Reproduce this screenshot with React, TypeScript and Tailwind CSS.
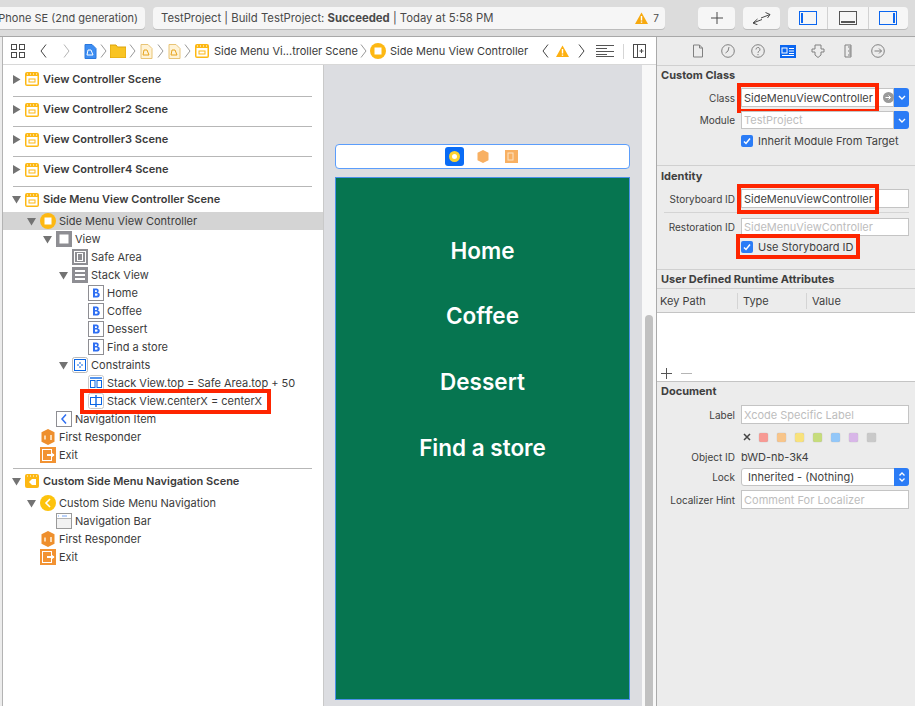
import React from 'react';

type Kind =
  | 'scene'
  | 'sceneNav'
  | 'vc'
  | 'view'
  | 'safe'
  | 'stack'
  | 'button'
  | 'constraints'
  | 'cTop'
  | 'cCenter'
  | 'navItem'
  | 'responder'
  | 'exit'
  | 'navVc'
  | 'navBar';

const Icon = ({ kind }: { kind: Kind }) => {
  const s = { width: 16, height: 16, viewBox: '0 0 16 16', className: 'shrink-0' };
  switch (kind) {
    case 'scene':
      return (
        <svg {...s}>
          <rect x="1" y="1" width="14" height="14" rx="2" fill="#fdb813" />
          <rect x="2.5" y="5" width="11" height="8.5" fill="#fff" />
          <rect x="5" y="8" width="6" height="3" fill="#fff" stroke="#fdb813" />
          <path d="M3 3h1M6 3h1M9 3h1M12 3h1" stroke="#fff" />
        </svg>
      );
    case 'sceneNav':
      return (
        <svg {...s}>
          <rect x="1" y="1" width="14" height="14" rx="2" fill="#fdb813" />
          <path d="M3 3h1M6 3h1M9 3h1M12 3h1" stroke="#fff" />
          <path d="M5 9l3-3h4v6H8z" fill="#fff" />
        </svg>
      );
    case 'vc':
      return (
        <svg {...s}>
          <circle cx="8" cy="8" r="8" fill="#fdb813" />
          <rect x="4.5" y="4.5" width="7" height="7" fill="#fff" />
        </svg>
      );
    case 'navVc':
      return (
        <svg {...s}>
          <circle cx="8" cy="8" r="8" fill="#fdc30c" />
          <path d="M10 4L6 8l4 4" fill="none" stroke="#fff" strokeWidth="1.6" />
        </svg>
      );
    case 'view':
      return (
        <svg {...s}>
          <rect width="16" height="16" fill="#8e8e93" />
          <rect x="3.5" y="3.5" width="9" height="9" fill="#fff" />
        </svg>
      );
    case 'safe':
      return (
        <svg {...s}>
          <rect width="16" height="16" fill="#8e8e93" />
          <rect x="2.5" y="2.5" width="11" height="11" fill="none" stroke="#fff" />
          <rect x="5.5" y="4.5" width="5" height="7" fill="none" stroke="#fff" />
        </svg>
      );
    case 'stack':
      return (
        <svg {...s}>
          <rect width="16" height="16" fill="#8e8e93" />
          <path d="M3 4h10M3 8h10M3 12h10" stroke="#fff" strokeWidth="2" />
        </svg>
      );
    case 'button':
      return (
        <svg {...s}>
          <rect x="0.5" y="0.5" width="15" height="15" fill="#fff" stroke="#8e8e93" />
          <path
            d="M5 3.500h3.500a2.200 2.200 0 0 1 1.200 4.100A2.400 2.400 0 0 1 8.800 12.500H5zM7 5.200v1.800h1.200a.9.900 0 0 0 0-1.800zM7 8.500v2.300h1.500a1.150 1.150 0 0 0 0-2.300z"
            fill="#2f6ff2"
          />
        </svg>
      );
    case 'constraints':
      return (
        <svg {...s}>
          <rect x="0.5" y="0.5" width="15" height="15" rx="2" fill="#fff" stroke="#b9b9b9" />
          <rect x="2.5" y="2.5" width="11" height="11" fill="none" stroke="#0b66e4" />
          <path d="M8 5v2M8 9v2M5 8h2M9 8h2" stroke="#0b66e4" />
        </svg>
      );
    case 'cTop':
      return (
        <svg {...s}>
          <rect x="0.5" y="0.5" width="15" height="15" rx="2" fill="#fff" stroke="#c9c9c9" />
          <path d="M2 3h12" stroke="#0b66e4" strokeWidth="1.4" />
          <rect x="2.5" y="5.5" width="4.5" height="7" fill="none" stroke="#0b66e4" />
          <rect x="9" y="5.5" width="4.5" height="7" fill="none" stroke="#0b66e4" />
        </svg>
      );
    case 'cCenter':
      return (
        <svg {...s}>
          <rect x="0.5" y="0.5" width="15" height="15" rx="2" fill="#fff" stroke="#c9c9c9" />
          <rect x="2.5" y="4.5" width="11" height="7" fill="none" stroke="#0b66e4" />
          <path d="M8 2v12" stroke="#0b66e4" strokeWidth="1.4" />
        </svg>
      );
    case 'navItem':
      return (
        <svg {...s}>
          <rect x="0.5" y="0.5" width="15" height="15" fill="#fff" stroke="#8e8e93" />
          <path d="M10 3.500L6 8l4 4.500" fill="none" stroke="#2f6ff2" strokeWidth="1.5" />
        </svg>
      );
    case 'responder':
      return (
        <svg {...s}>
          <path d="M8 0l6.500 3.200v9.600L8 16l-6.500-3.200V3.200z" fill="#ee8f2d" />
          <path d="M4 6.500h2v4H4zM10 6h2v5h-2z" fill="#fbd9ae" />
        </svg>
      );
    case 'exit':
      return (
        <svg {...s}>
          <rect width="16" height="16" fill="#f29333" />
          <rect x="2.5" y="2.5" width="9" height="11" fill="none" stroke="#fff" />
          <path d="M7 8h7" stroke="#fff" strokeWidth="2" />
          <path d="M11 5l3.500 3-3.500 3z" fill="#fff" />
        </svg>
      );
    case 'navBar':
      return (
        <svg {...s}>
          <rect x="0.5" y="0.5" width="15" height="15" fill="#f2f2f2" stroke="#9a9a9a" />
          <rect x="1" y="1" width="14" height="4" fill="#fff" />
          <path d="M2 3h1M6 3h5" stroke="#77a5f5" />
          <path d="M1 5.500h14" stroke="#b5b5b5" />
        </svg>
      );
  }
};

const Triangle = ({ open }: { open: boolean }) => (
  <svg width="9" height="9" viewBox="0 0 9 9" className="shrink-0">
    {open ? <path d="M0 1h9L4.500 8.500z" fill="#737373" /> : <path d="M1 0l7.500 4.500L1 9z" fill="#737373" />}
  </svg>
);

const Row = ({
  depth,
  kind,
  label,
  open,
  selected,
  boxed,
}: {
  depth: number;
  kind: Kind;
  label: string;
  open?: boolean;
  selected?: boolean;
  boxed?: boolean;
}) => (
  <div className={`relative flex h-[18px] items-center ${selected ? 'bg-[#d4d4d4]' : ''}`}>
    <div style={{ width: 21 + depth * 16 }} className="flex shrink-0 justify-end pr-[4px]">
      {open !== undefined && <Triangle open={open} />}
    </div>
    <Icon kind={kind} />
    <span className="ml-[3px] whitespace-nowrap">{label}</span>
    {boxed && <div className="absolute -top-[3px] -bottom-[4px] left-[77px] w-[191px] border-[4px] border-[#fe2500]" />}
  </div>
);

const SceneRow = ({ label, open, kind = 'scene', cls }: { label: string; open?: boolean; kind?: Kind; cls: string }) => (
  <div className={`flex items-center pl-[9px] font-semibold ${cls}`}>
    <Triangle open={!!open} />
    <span className="ml-[3px] flex">
      <Icon kind={kind} />
    </span>
    <span className="ml-[3px] whitespace-nowrap">{label}</span>
  </div>
);

const Rule = () => <div className="mr-[11px] ml-[10px] h-px bg-[#b7b7b7]" />;

const Outline = () => (
  <div className="w-[320px] shrink-0 bg-white pt-[1px] text-[11px] text-[#3b3b3b]">
    <SceneRow label="View Controller Scene" cls="h-[30px] pb-[4px]" />
    <Rule />
    <SceneRow label="View Controller2 Scene" cls="h-[29px] pb-[4px]" />
    <Rule />
    <SceneRow label="View Controller3 Scene" cls="h-[29px] pb-[4px]" />
    <Rule />
    <SceneRow label="View Controller4 Scene" cls="h-[29px] pb-[4px]" />
    <Rule />
    <SceneRow label="Side Menu View Controller Scene" open cls="h-[25px]" />
    <Row depth={1} kind="vc" label="Side Menu View Controller" open selected />
    <Row depth={2} kind="view" label="View" open />
    <Row depth={3} kind="safe" label="Safe Area" />
    <Row depth={3} kind="stack" label="Stack View" open />
    <Row depth={4} kind="button" label="Home" />
    <Row depth={4} kind="button" label="Coffee" />
    <Row depth={4} kind="button" label="Dessert" />
    <Row depth={4} kind="button" label="Find a store" />
    <Row depth={3} kind="constraints" label="Constraints" open />
    <Row depth={4} kind="cTop" label="Stack View.top = Safe Area.top + 50" />
    <Row depth={4} kind="cCenter" label="Stack View.centerX = centerX" boxed />
    <Row depth={2} kind="navItem" label="Navigation Item" />
    <Row depth={1} kind="responder" label="First Responder" />
    <Row depth={1} kind="exit" label="Exit" />
    <div className="h-[4px]" />
    <Rule />
    <SceneRow label="Custom Side Menu Navigation Scene" open kind="sceneNav" cls="h-[24px]" />
    <div className="h-[1px]" />
    <Row depth={1} kind="navVc" label="Custom Side Menu Navigation" open />
    <Row depth={2} kind="navBar" label="Navigation Bar" />
    <Row depth={1} kind="responder" label="First Responder" />
    <Row depth={1} kind="exit" label="Exit" />
  </div>
);

const TbButton = ({ className, children }: { className: string; children: React.ReactNode }) => (
  <div className={`flex h-[22px] items-center justify-center rounded-[4px] bg-[#f6f6f6] shadow-[0_1px_0_#bcbcbc] ${className}`}>
    {children}
  </div>
);

const Toolbar = () => (
  <div className="flex h-[37px] shrink-0 items-center overflow-hidden border-b border-[#a8a8a8] bg-[#dcdcdc] text-[11.3px] text-[#4a4a4a]">
    <TbButton className="ml-[-10px] w-[155px] justify-end pr-[7px]">
      <span className="text-[11px] whitespace-nowrap">Phone SE (2nd generation)</span>
    </TbButton>
    <TbButton className="ml-[8px] w-[512px] justify-start pl-[8px]">
      <span className="whitespace-nowrap">
        TestProject | Build TestProject: <b className="font-bold">Succeeded</b> | Today at 5:58 PM
      </span>
      <span className="ml-auto flex items-center gap-[5px] pr-[6px]">
        <svg width="13" height="12" viewBox="0 0 13 12">
          <path d="M6.500 0.500L13 12H0z" fill="#f7a90f" />
          <path d="M6.500 4v4.500M6.500 9.500v1.300" stroke="#fff" strokeWidth="1.400" />
        </svg>
        <span className="text-[10px]">7</span>
      </span>
    </TbButton>
    <TbButton className="ml-[33px] w-[37px]">
      <svg width="12" height="12" viewBox="0 0 12 12">
        <path d="M6 0v12M0 6h12" stroke="#4a4a4a" />
      </svg>
    </TbButton>
    <TbButton className="ml-[8px] w-[37px]">
      <svg width="19" height="13" viewBox="0 0 19 13" fill="none" stroke="#4a4a4a">
        <path d="M9 6l9-3.500M13.500 .5L18 2.500l-2.500 3.500M10 7.500L1 11M5.500 7L1 11l4.500 1.800" />
      </svg>
    </TbButton>
    <TbButton className="ml-[8px] w-[120px] divide-x divide-[#d2d2d2]">
      <span className="flex h-full flex-1 items-center justify-center">
        <svg width="18" height="14" viewBox="0 0 18 14">
          <rect x="0.5" y="0.5" width="17" height="13" fill="none" stroke="#0b66f0" />
          <rect x="2" y="2" width="2" height="10" fill="#0b66f0" />
        </svg>
      </span>
      <span className="flex h-full flex-1 items-center justify-center">
        <svg width="18" height="14" viewBox="0 0 18 14">
          <rect x="0.5" y="0.5" width="17" height="13" fill="none" stroke="#555" />
          <rect x="2" y="10" width="14" height="2" fill="#555" />
        </svg>
      </span>
      <span className="flex h-full flex-1 items-center justify-center">
        <svg width="18" height="14" viewBox="0 0 18 14">
          <rect x="0.5" y="0.5" width="17" height="13" fill="none" stroke="#0b66f0" />
          <rect x="14" y="2" width="2" height="10" fill="#0b66f0" />
        </svg>
      </span>
    </TbButton>
  </div>
);

const Chev = ({ dir = 'r', color = '#999' }: { dir?: 'l' | 'r'; color?: string }) => (
  <svg width="7" height="14" viewBox="0 0 7 14" fill="none" stroke={color} className="shrink-0">
    <path d={dir === 'r' ? 'M1 0.500L6 7l-5 6.500' : 'M6 0.500L1 7l5 6.500'} />
  </svg>
);

const Doc = ({ blue }: { blue?: boolean }) => (
  <svg width="13" height="15" viewBox="0 0 13 15" className="shrink-0">
    <path d="M1 .5h7l4 4v10H1z" fill={blue ? '#3d8df2' : '#fff3d6'} stroke={blue ? '#2a78de' : '#e8c476'} />
    <path d="M4 6l3 0 2 5H3z" fill="none" stroke={blue ? '#fff' : '#e6a31c'} />
  </svg>
);

const JumpBar = () => (
  <div className="flex h-[28px] shrink-0 items-center border-b border-[#d8d8d8] bg-white pt-[1px] text-[11px] text-[#3b3b3b]">
    <svg width="14" height="14" viewBox="0 0 14 14" fill="none" stroke="#4a4a4a" className="ml-[8px] shrink-0">
      <rect x=".5" y=".5" width="5" height="5" />
      <rect x="8.5" y=".5" width="5" height="5" />
      <rect x=".5" y="8.5" width="5" height="5" />
      <rect x="8.5" y="8.5" width="5" height="5" />
    </svg>
    <span className="ml-[15px] flex"><Chev dir="l" color="#444" /></span>
    <span className="ml-[16px] flex"><Chev color="#b5b5b5" /></span>
    <span className="ml-[14px] flex"><Doc blue /></span>
    <span className="ml-[3px] flex"><Chev /></span>
    <svg width="16" height="14" viewBox="0 0 16 14" className="ml-[3px] shrink-0">
      <path d="M0 1h6l1.500 2H16v11H0z" fill="#f9c423" stroke="#dca30c" />
    </svg>
    <span className="ml-[3px] flex"><Chev /></span>
    <span className="ml-[4px] flex"><Doc /></span>
    <span className="ml-[4px] flex"><Chev /></span>
    <span className="ml-[4px] flex"><Doc /></span>
    <span className="ml-[3px] flex"><Chev /></span>
    <span className="ml-[3px] flex"><Icon kind="scene" /></span>
    <span className="ml-[4px] w-[144px] whitespace-nowrap">Side Menu Vi...troller Scene</span>
    <span className="ml-[2px] flex"><Chev /></span>
    <span className="ml-[3px] flex"><Icon kind="vc" /></span>
    <span className="ml-[4px] w-[138px] whitespace-nowrap">Side Menu View Controller</span>
    <span className="ml-[14px] flex"><Chev dir="l" color="#444" /></span>
    <svg width="13" height="12" viewBox="0 0 13 12" className="ml-[7px] shrink-0">
      <path d="M6.500 0.500L13 12H0z" fill="#fdb011" />
      <path d="M6.500 4v4.500M6.500 9.500v1.300" stroke="#fff" strokeWidth="1.400" />
    </svg>
    <span className="ml-[9px] flex"><Chev color="#444" /></span>
    <svg width="18" height="12" viewBox="0 0 18 12" stroke="#555" className="ml-[11px] shrink-0">
      <path d="M0 .5h18M0 3.500h11M0 6.500h18M0 9.500h11M0 11.500h18" />
    </svg>
    <div className="ml-[9px] h-[15px] w-px bg-[#d5d5d5]" />
    <svg width="13" height="14" viewBox="0 0 13 14" fill="none" stroke="#4a4a4a" className="ml-[9px] shrink-0">
      <rect x=".5" y=".5" width="12" height="13" />
      <path d="M4.500 0v14M6.500 7h4M8.500 5v4" />
    </svg>
  </div>
);

const Canvas = () => (
  <div className="flex flex-1 border-l border-[#c9c9c9]">
    <div className="flex w-[318px] flex-col items-center bg-[#dcdde1] pt-[79px] pr-[1px]">
      <div className="flex h-[25px] w-[295px] items-center justify-center rounded-[4px] border border-[#5b9dfb] bg-white pr-[2px]">
        <div className="flex h-[19px] w-[19px] items-center justify-center rounded-[3px] bg-[#0a6cf5]">
          <div className="h-[11px] w-[11px] rounded-full border-[3px] border-[#fdd32f] bg-white" />
        </div>
        <svg width="12" height="13" viewBox="0 0 12 13" className="ml-[13px]">
          <path d="M6 0l5.500 2.700v7.600L6 13 .5 10.300V2.700z" fill="#f8b062" />
        </svg>
        <svg width="13" height="13" viewBox="0 0 13 13" className="ml-[16px]">
          <rect width="13" height="13" fill="#f8b062" />
          <rect x="3" y="3" width="5" height="7" fill="none" stroke="#fde3c4" />
        </svg>
      </div>
      <div className="mt-[8px] flex h-[523px] w-[295px] flex-col items-center border border-[#4a90e8] bg-[#067550] pt-[58px] text-[22.5px] font-semibold text-white">
        <span className="h-[65px] leading-[30px]">Home</span>
        <span className="h-[66px] leading-[30px]">Coffee</span>
        <span className="h-[66px] leading-[30px]">Dessert</span>
        <span className="leading-[30px]">Find a store</span>
      </div>
    </div>
    <div className="flex w-[14px] justify-center bg-[#f8f8f8] pt-[250px]">
      <div className="h-[391px] w-[8px] rounded-t-full bg-[#c1c1c1]" />
    </div>
  </div>
);

const Field = ({ children, className = 'h-[19px]', dim }: { children?: React.ReactNode; className?: string; dim?: boolean }) => (
  <div className={`relative flex items-center border border-[#c4c4c4] bg-white pl-[2px] text-[11px] whitespace-nowrap ${dim ? 'text-[#bdbdbd]' : ''} ${className}`}>
    {children}
  </div>
);

const FormRow = ({ label, children, className = '' }: { label: string; children: React.ReactNode; className?: string }) => (
  <div className={`flex items-center pr-[6px] leading-[14px] ${className}`}>
    <span className="w-[78px] shrink-0 text-right text-[10px] whitespace-nowrap">{label}</span>
    <div className="ml-[6px] flex-1">{children}</div>
  </div>
);

const RedBox = ({ className }: { className: string }) => <div className={`absolute border-[4px] border-[#fe2500] ${className}`} />;

const Blue = ({ children, className = '' }: { children: React.ReactNode; className?: string }) => (
  <div className={`flex items-center justify-center bg-[#2b7cf6] ${className}`}>{children}</div>
);

const DownArrow = () => (
  <svg width="8" height="5" viewBox="0 0 8 5" fill="none" stroke="#fff" strokeWidth="1.400">
    <path d="M1 1l3 3 3-3" />
  </svg>
);

const Check = ({ label }: { label: string }) => (
  <div className="flex h-[12px] items-center gap-[5px]">
    <div className="flex h-[12px] w-[12px] items-center justify-center rounded-[2px] bg-[#2b7cf6]">
      <svg width="8" height="8" viewBox="0 0 8 8" fill="none" stroke="#fff" strokeWidth="1.500">
        <path d="M1 4.500l2 2 4-5" />
      </svg>
    </div>
    <span className="whitespace-nowrap">{label}</span>
  </div>
);

const SectionTitle = ({ children, className = '' }: { children: React.ReactNode; className?: string }) => (
  <div className={`pl-[4px] font-bold ${className}`}>{children}</div>
);

const InspectorTabs = () => (
  <div className="flex h-[29px] shrink-0 items-center justify-center gap-[14px] border-b border-[#d0d0d0] pl-[3px]">
    <svg width="16" height="14" viewBox="0 0 16 14" fill="none" stroke="#808080">
      <path d="M3.500 1h6l3 3v9h-9zM9.500 1v3h3" />
    </svg>
    <svg width="16" height="14" viewBox="0 0 14 14" fill="none" stroke="#808080">
      <circle cx="7" cy="7" r="6.300" />
      <path d="M8 3L7 7 4.500 9" />
    </svg>
    <svg width="16" height="14" viewBox="0 0 14 14" fill="none" stroke="#808080">
      <circle cx="7" cy="7" r="6.300" />
      <path d="M5 5.500a2 2 0 1 1 3 1.700c-.7.400-1 .8-1 1.600M7 10v1.200" />
    </svg>
    <svg width="16" height="13" viewBox="0 0 16 13">
      <rect width="16" height="13" fill="#0b66f0" />
      <rect x="2" y="3" width="5" height="5" fill="none" stroke="#fff" />
      <path d="M9 3.500h5M9 6h5M9 8.500h5M2 10.500h12" stroke="#fff" />
    </svg>
    <svg width="16" height="14" viewBox="0 0 14 14" fill="none" stroke="#808080">
      <path d="M4 1h6v4h3v3h-3v3l-3 2.500L4 11V8H1V5h3z" />
    </svg>
    <svg width="16" height="14" viewBox="0 0 14 14" fill="none" stroke="#808080">
      <path d="M4 1h6v12H4zM7 3h3M8 5h2M7 7h3M8 9h2M7 11h3" />
    </svg>
    <svg width="16" height="14" viewBox="0 0 14 14" fill="none" stroke="#808080">
      <circle cx="7" cy="7" r="6.300" />
      <path d="M3.500 7h7M8 4.500L10.500 7 8 9.500" />
    </svg>
  </div>
);

const colors = ['#f79a94', '#f8c58a', '#f8e27c', '#c6dc7c', '#93c7f8', '#d8b6e8', '#c9c9c9'];

const Inspector = () => (
  <div className="flex w-[259px] shrink-0 flex-col border-l border-[#aaaaaa] bg-[#ececec] text-[11px] text-[#3f3f3f]">
    <InspectorTabs />
    <div className="h-[100px] border-b border-[#d0d0d0] pt-[2px]">
      <SectionTitle className="leading-[14px]">Custom Class</SectionTitle>
      <FormRow label="Class" className="mt-[6px]">
        <div className="flex">
          <Field className="h-[19px] flex-1">
            SideMenuViewController
            <RedBox className="-top-[6px] -bottom-[7px] -left-[5px] w-[142px]" />
            <span className="mr-[-1px] ml-auto flex h-[11px] w-[11px] items-center justify-center rounded-full bg-[#9a9a9a]">
              <svg width="7" height="7" viewBox="0 0 7 7" fill="none" stroke="#fff">
                <path d="M.5 3.500h5M3.500 1.500l2 2-2 2" />
              </svg>
            </span>
          </Field>
          <Blue className="w-[15px] rounded-r-[3px]"><DownArrow /></Blue>
        </div>
      </FormRow>
      <FormRow label="Module" className="mt-[4px]">
        <div className="flex">
          <Field dim className="h-[18px] flex-1">TestProject</Field>
          <Blue className="w-[15px] rounded-r-[3px]"><DownArrow /></Blue>
        </div>
      </FormRow>
      <div className="mt-[6px] ml-[84px]">
        <Check label="Inherit Module From Target" />
      </div>
    </div>
    <div className="h-[104px] border-b border-[#d0d0d0] pt-[3px]">
      <SectionTitle className="leading-[14px]">Identity</SectionTitle>
      <FormRow label="Storyboard ID" className="mt-[6px]">
        <Field>
          SideMenuViewController
          <RedBox className="-top-[6px] -bottom-[7px] -left-[5px] w-[142px]" />
        </Field>
      </FormRow>
      <div className="mt-[4px] mr-[6px] ml-[7px] h-px bg-[#d4d4d4]" />
      <FormRow label="Restoration ID" className="mt-[5px]">
        <Field dim className="h-[18px]">SideMenuViewController</Field>
      </FormRow>
      <div className="relative mt-[5px] ml-[84px] w-fit">
        <Check label="Use Storyboard ID" />
        <RedBox className="-top-[7px] -bottom-[6px] -left-[5px] w-[124px]" />
      </div>
    </div>
    <div className="flex h-[19px] items-center border-b border-[#d0d0d0]">
      <SectionTitle>User Defined Runtime Attributes</SectionTitle>
    </div>
    <div className="flex h-[24px] items-center border-b border-[#c4c4c4] pl-[3px]">
      <span className="w-[78px] border-r border-[#d4d4d4] leading-[16px]">Key Path</span>
      <span className="w-[69px] border-r border-[#d4d4d4] pl-[5px] leading-[16px]">Type</span>
      <span className="pl-[5px] leading-[16px]">Value</span>
    </div>
    <div className="flex h-[69px] items-end gap-[9px] border-b border-[#c4c4c4] bg-white pb-[2px] pl-[4px]">
      <svg width="11" height="11" viewBox="0 0 11 11"><path d="M5.500 0v11M0 5.500h11" stroke="#555" /></svg>
      <svg width="11" height="11" viewBox="0 0 11 11"><path d="M0 5.500h11" stroke="#b5b5b5" /></svg>
    </div>
    <div className="pt-[2px]">
      <SectionTitle className="leading-[14px]">Document</SectionTitle>
      <FormRow label="Label" className="mt-[7px]">
        <Field dim>Xcode Specific Label</Field>
      </FormRow>
      <div className="mt-[6px] ml-[84px] flex h-[14px] items-center gap-[9px] pl-[2px]">
        <svg width="8" height="8" viewBox="0 0 8 8" className="mr-[-1px]">
          <path d="M1 1l6 6M7 1L1 7" stroke="#444" strokeWidth="1.500" />
        </svg>
        {colors.map((c) => (
          <div key={c} className="h-[9px] w-[9px] rounded-[2px] shadow-[0_0_1px_#999]" style={{ backgroundColor: c }} />
        ))}
      </div>
      <FormRow label="Object ID" className="mt-[6px]">bWD-nb-3k4</FormRow>
      <FormRow label="Lock" className="mt-[4px]">
        <div className="flex h-[18px] rounded-[3px] border border-[#c4c4c4] bg-white">
          <span className="flex-1 pl-[6px] leading-[16px]">Inherited - (Nothing)</span>
          <Blue className="-my-px -mr-px w-[15px] rounded-r-[3px]">
            <svg width="8" height="12" viewBox="0 0 8 12" fill="none" stroke="#fff" strokeWidth="1.300">
              <path d="M1.500 4.500L4 2l2.500 2.500M1.500 7.500L4 10l2.500-2.500" />
            </svg>
          </Blue>
        </div>
      </FormRow>
      <FormRow label="Localizer Hint" className="mt-[4px]">
        <Field dim>Comment For Localizer</Field>
      </FormRow>
    </div>
  </div>
);

const App = () => {
  return (
    <div className="flex h-[706px] w-[915px] flex-col overflow-hidden bg-[#ececec] font-['Inter',sans-serif]">
      <Toolbar />
      <div className="flex min-h-0 flex-1">
        <div className="w-[2px] shrink-0 bg-[#ececec]" />
        <div className="flex w-[654px] shrink-0 flex-col border-l border-[#b3b3b3]">
          <JumpBar />
          <div className="flex min-h-0 flex-1">
            <Outline />
            <Canvas />
          </div>
        </div>
        <Inspector />
      </div>
    </div>
  );
};

export default App;
